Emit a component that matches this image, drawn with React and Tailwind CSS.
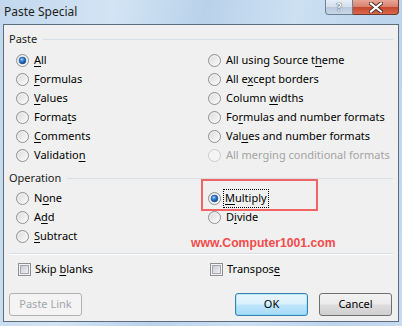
import React from 'react';

const font = { fontFamily: '"Noto Sans", "Open Sans", sans-serif' };

const Radio = ({ checked, disabled }) => (
  <svg width="13" height="13" viewBox="0 0 13 13" className="shrink-0">
    <circle cx="6.5" cy="6.5" r="6" fill={disabled ? '#f4f4f4' : 'url(#radioFill)'} stroke={disabled ? '#c9c9c9' : '#8e8f8f'} strokeWidth="1" />
    <circle cx="6.5" cy="6.5" r="4.6" fill="none" stroke={disabled ? '#f8f8f8' : '#f4f4f4'} strokeWidth="0.8" />
    {checked && (
      <circle cx="6.5" cy="6.5" r="3.4" fill="url(#radioDot)" stroke="#1b4f8f" strokeWidth="0.6" />
    )}
  </svg>
);

const Checkbox = () => (
  <svg width="13" height="13" viewBox="0 0 13 13" className="shrink-0">
    <rect x="0.5" y="0.5" width="12" height="12" fill="#f4f4f4" stroke="#8e8f8f" />
    <rect x="2.5" y="2.5" width="8" height="8" fill="url(#checkFill)" stroke="#a4a8ae" />
  </svg>
);

const Label = ({ text, u }) => {
  if (u === undefined) return <span>{text}</span>;
  return (
    <span>
      {text.slice(0, u)}
      <u className="underline-offset-2">{text[u]}</u>
      {text.slice(u + 1)}
    </span>
  );
};

const RadioRow = ({ text, u, checked, disabled }) => (
  <div className={`h-[19px] flex items-center gap-[5px] ${disabled ? 'text-[#a3a3a3]' : 'text-[#000]'}`}>
    <Radio checked={checked} disabled={disabled} />
    <Label text={text} u={u} />
  </div>
);

const Heading = ({ children }) => (
  <div className="h-[18px] flex items-center pl-[5px] pr-[5px] gap-[6px] text-[#1c1c1c]">
    <span>{children}</span>
    <div className="flex-1 h-px bg-[#d5dfe5]" />
  </div>
);

const Button = ({ children, primary, disabled }) => (
  <div
    className={`w-[73px] h-[23px] rounded-[3px] border flex items-center justify-center ${
      disabled
        ? 'border-[#adb2b5] bg-[#f4f4f4] text-[#a0a6ad]'
        : primary
        ? 'border-[#3c7fb1] bg-[linear-gradient(#eaf6fd_0%,#d9f0fc_48%,#bee6fd_52%,#a7d9f5_100%)] shadow-[inset_0_0_0_1px_#48d8fb55] text-[#000]'
        : 'border-[#707070] bg-[linear-gradient(#f2f2f2_0%,#ebebeb_48%,#dddddd_52%,#cfcfcf_100%)] text-[#000]'
    }`}
  >
    {children}
  </div>
);

export default function App() {
  const leftPaste = [
    { text: 'All', u: 0, checked: true },
    { text: 'Formulas', u: 0 },
    { text: 'Values', u: 0 },
    { text: 'Formats', u: 5 },
    { text: 'Comments', u: 0 },
    { text: 'Validation', u: 9 },
  ];
  const rightPaste = [
    { text: 'All using Source theme', u: 18 },
    { text: 'All except borders', u: 5 },
    { text: 'Column widths', u: 7 },
    { text: 'Formulas and number formats', u: 2 },
    { text: 'Values and number formats', u: 3 },
    { text: 'All merging conditional formats', disabled: true },
  ];

  return (
    <div
      className="w-[402px] h-[326px] overflow-hidden flex flex-col text-[11px] bg-[linear-gradient(100deg,#c2d8ee_0%,#d3e4f4_25%,#b9d2ea_45%,#cde0f2_65%,#bcd4ec_85%,#c6dbef_100%)]"
      style={font}
    >
      <svg width="0" height="0" className="absolute">
        <defs>
          <linearGradient id="radioFill" x1="0" y1="0" x2="1" y2="1">
            <stop offset="0" stopColor="#d6d6d6" />
            <stop offset="1" stopColor="#ffffff" />
          </linearGradient>
          <radialGradient id="radioDot" cx="0.4" cy="0.35" r="0.7">
            <stop offset="0" stopColor="#a8d4fa" />
            <stop offset="0.45" stopColor="#2d7ad4" />
            <stop offset="1" stopColor="#0c3f84" />
          </radialGradient>
          <linearGradient id="checkFill" x1="0" y1="0" x2="1" y2="1">
            <stop offset="0" stopColor="#c6cad0" />
            <stop offset="1" stopColor="#f2f3f4" />
          </linearGradient>
        </defs>
      </svg>

      {/* Title bar */}
      <div className="h-[24px] flex items-start shrink-0">
        <div className="pl-[4px] pt-[3px] text-[12px] text-[#1e1e1e]">Paste Special</div>
        <div className="ml-auto mr-[3px] flex">
          <div className="w-[28px] h-[15px] border border-t-0 border-[#6f8093] rounded-bl-[4px] bg-[linear-gradient(#e6eef6_0%,#d3dfeb_50%,#b8c9dc_51%,#c9d8e8_100%)] flex items-center justify-center">
            <span className="text-[11px] leading-[14px] font-bold text-white [text-shadow:0_0_1px_#2b3a4a,0_0_1px_#2b3a4a]">?</span>
          </div>
          <div className="w-[46px] h-[15px] border border-t-0 border-l-0 border-[#6f3a30] rounded-br-[4px] bg-[linear-gradient(#e8a595_0%,#d7826d_50%,#c7472d_51%,#d9684c_100%)] flex items-center justify-center">
            <svg width="14" height="11" viewBox="0 0 14 11">
              <path d="M2 1.5 L12 9.5 M12 1.5 L2 9.5" stroke="#4a2a22" strokeWidth="4" strokeLinecap="square" />
              <path d="M2 1.5 L12 9.5 M12 1.5 L2 9.5" stroke="#ffffff" strokeWidth="2.2" strokeLinecap="square" />
            </svg>
          </div>
        </div>
      </div>

      {/* Client area */}
      <div className="ml-[3px] w-[396px] h-[298px] border border-[#5d6d7e] bg-[#f0f0f0] relative flex flex-col">
        <div className="pt-[5px]">
          <Heading>Paste</Heading>
        </div>
        <div className="mt-[3px] grid grid-cols-[192px_1fr] pl-[12px]">
          <div className="flex flex-col">
            {leftPaste.map((r) => (
              <RadioRow key={r.text} {...r} />
            ))}
          </div>
          <div className="flex flex-col">
            {rightPaste.map((r) => (
              <RadioRow key={r.text} {...r} />
            ))}
          </div>
        </div>

        <div className="mt-[4px]">
          <Heading>Operation</Heading>
        </div>
        <div className="mt-[2px] grid grid-cols-[192px_1fr] pl-[12px]">
          <div className="flex flex-col">
            <RadioRow text="None" u={1} />
            <RadioRow text="Add" u={1} />
            <RadioRow text="Subtract" u={0} />
          </div>
          <div className="flex flex-col">
            <div className="h-[19px] flex items-center gap-[5px]">
              <Radio checked />
              <span className="outline outline-1 outline-dotted outline-[#000] px-[1px] -ml-[2px]">
                <Label text="Multiply" u={0} />
              </span>
            </div>
            <RadioRow text="Divide" u={1} />
          </div>
        </div>

        <div className="mt-[7px] mx-[5px] h-[2px] border-t border-[#d5dfe5] border-b border-b-white" />

        <div className="mt-[5px] h-[19px] grid grid-cols-[192px_1fr] pl-[14px]">
          <div className="flex items-center gap-[4px]">
            <Checkbox />
            <Label text="Skip blanks" u={5} />
          </div>
          <div className="flex items-center gap-[4px]">
            <Checkbox />
            <Label text="Transpose" u={8} />
          </div>
        </div>

        <div className="mt-[14px] flex px-[5px] pr-[6px]">
          <Button disabled>Paste Link</Button>
          <div className="ml-auto flex gap-[11px]">
            <Button primary>OK</Button>
            <Button>Cancel</Button>
          </div>
        </div>

        {/* Annotation overlay */}
        <div className="absolute left-[197px] top-[154px] w-[117px] h-[32px] border-2 border-[#f06464]" />
        <div
          className="absolute left-[187px] top-[209px] text-[12.2px] font-bold text-[#f24b4b]"
          style={{ fontFamily: '"Liberation Sans", Arial, sans-serif' }}
        >
          www.Computer1001.com
        </div>
      </div>
    </div>
  );
}
